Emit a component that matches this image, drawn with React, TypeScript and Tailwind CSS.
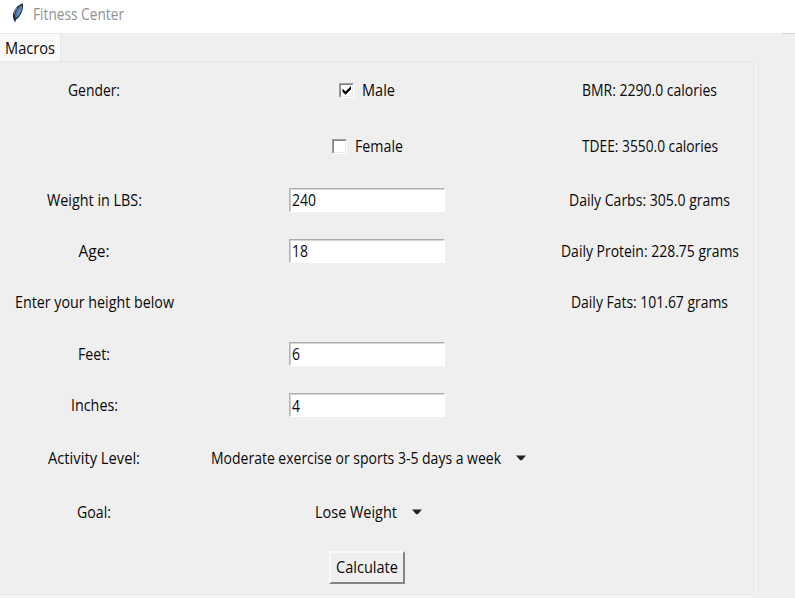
import { useLayoutEffect, useRef, useState } from "react";
import type { ReactNode } from "react";

/** A single line of text condensed or widened to fill the given width. */
function Text({ w, children }: { w: number; children: string }) {
  const ref = useRef<HTMLSpanElement>(null);
  const [scale, setScale] = useState(1);
  useLayoutEffect(() => {
    if (ref.current) setScale(w / ref.current.getBoundingClientRect().width);
  }, []);
  return (
    <span className="inline-block h-5 leading-5 whitespace-nowrap" style={{ width: w }}>
      <span ref={ref} className="inline-block origin-left" style={{ transform: `scaleX(${scale})` }}>
        {children}
      </span>
    </span>
  );
}

function Cell({ children }: { children?: ReactNode }) {
  return <div className="flex min-w-0 items-center justify-center">{children}</div>;
}

function Check({ on }: { on?: boolean }) {
  return (
    <span className="flex h-[15px] w-[15px] border border-t-[#a0a0a0] border-l-[#a0a0a0] border-r-white border-b-white">
      <span className="flex h-[13px] w-[13px] border border-t-[#808080] border-l-[#808080] border-r-[#e8e8e8] border-b-[#e8e8e8] bg-white">
        {on && (
          <svg viewBox="0 0 11 11" className="h-[11px] w-[11px]">
            <path d="M1.500 3.500v3.200L4.500 9.700L10 4.200V1L4.500 6.500z" fill="#000" />
          </svg>
        )}
      </span>
    </span>
  );
}

function Field({ value, w }: { value: string; w: number }) {
  return (
    <div className="flex h-6 w-[156px] items-center border border-t-[#adadad] border-l-[#b5b5b5] border-r-white border-b-white bg-white">
      <div className="flex h-full w-full items-center border-t border-l border-t-[#d8d8d8] border-l-[#d0d0d0] pl-px">
        <Text w={w}>{value}</Text>
      </div>
    </div>
  );
}

function Option({ label, w }: { label: string; w: number }) {
  return (
    <div className="flex items-center gap-[15px] pl-[3px]">
      <Text w={w}>{label}</Text>
      <svg viewBox="0 0 10 6" className="h-[6px] w-[10px]">
        <path d="M0 .5h10L5.800 5.200H4.200z" fill="#222" />
      </svg>
    </div>
  );
}

export default function App() {
  return (
    <div className="flex h-[598px] w-[795px] flex-col overflow-hidden bg-[#efefef] font-['Open_Sans','Noto_Sans',sans-serif] text-[15.5px] text-[#080808]">
      <header className="flex h-[33px] shrink-0 items-start bg-white pt-1 pl-[11px] text-[#929292]">
        <svg viewBox="0 0 13 20" className="-mt-px mr-[9px] h-5 w-[13px]">
          <path d="M12 .5C8 1 4 5 2.300 10c-.6 2.200-.5 4.500.4 6.500L4 19.500l1.200-3C9 14 11.500 9 12 4z" fill="#1c2c40" />
          <path d="M11 2C7.500 3.500 5 7.500 4 13l.8 2C8.500 12.500 10.500 9 11 4.500z" fill="#5b92d0" />
          <path d="M10.500 2.500Q5.500 8 4.200 15" fill="none" stroke="#253a55" strokeWidth=".5" />
          <path d="M6 4.500L2.800 11" stroke="#8a939c" strokeWidth="1" />
        </svg>
        <Text w={91}>Fitness Center</Text>
      </header>
      <div className="flex h-7 shrink-0 justify-between">
        <div className="-mb-px flex h-[29px] w-[61px] items-start border-t border-r border-[#e5e5e5] bg-[#fafafa] pt-1 pl-[5px]">
          <Text w={50}>Macros</Text>
        </div>
        <div className="h-px w-[13px] bg-[#d5d5d5]" />
      </div>
      <main className="grid h-[536px] w-[755px] shrink-0 grid-cols-[188px_358px_207px] grid-rows-[56px_56px_51px_51px_52px_51px_52px_54px_54px_56px] border-t border-r border-b border-t-[#e5e5e5] border-r-[#e5e5e5] border-b-[#fafafa] shadow-[1px_0_0_#f8f8f8]">
        <Cell><Text w={52}>Gender:</Text></Cell>
        <Cell>
          <div className="flex items-center gap-2"><Check on /><Text w={33}>Male</Text></div>
        </Cell>
        <Cell><Text w={135}>BMR: 2290.0 calories</Text></Cell>

        <Cell />
        <Cell>
          <div className="flex items-center gap-2"><Check /><Text w={48}>Female</Text></div>
        </Cell>
        <Cell><Text w={136}>TDEE: 3550.0 calories</Text></Cell>

        <Cell><Text w={95}>Weight in LBS:</Text></Cell>
        <Cell><Field value="240" w={24} /></Cell>
        <Cell><Text w={161}>Daily Carbs: 305.0 grams</Text></Cell>

        <Cell><Text w={31}>Age:</Text></Cell>
        <Cell><Field value="18" w={16} /></Cell>
        <Cell><Text w={178}>Daily Protein: 228.75 grams</Text></Cell>

        <Cell><Text w={159}>Enter your height below</Text></Cell>
        <Cell />
        <Cell><Text w={157}>Daily Fats: 101.67 grams</Text></Cell>

        <Cell><Text w={32}>Feet:</Text></Cell>
        <Cell><Field value="6" w={8} /></Cell>
        <Cell />

        <Cell><Text w={47}>Inches:</Text></Cell>
        <Cell><Field value="4" w={8} /></Cell>
        <Cell />

        <Cell><Text w={92}>Activity Level:</Text></Cell>
        <Cell><Option label="Moderate exercise or sports 3-5 days a week" w={290} /></Cell>
        <Cell />

        <Cell><Text w={34}>Goal:</Text></Cell>
        <Cell><Option label="Lose Weight" w={82} /></Cell>
        <Cell />

        <Cell />
        <Cell>
          <button className="flex h-[33px] w-[76px] items-center justify-center border-t-2 border-r-2 border-b-2 border-l-2 border-t-[#fafafa] border-l-[#fafafa] border-r-[#858585] border-b-[#858585] bg-[#efefef]">
            <Text w={62}>Calculate</Text>
          </button>
        </Cell>
        <Cell />
      </main>
    </div>
  );
}
